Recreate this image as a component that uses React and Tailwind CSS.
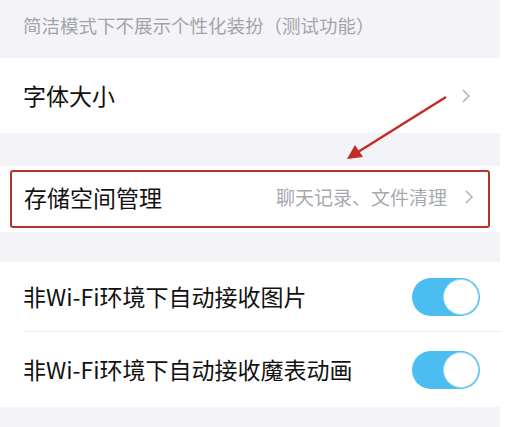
import React from 'react';

const font = { fontFamily: '"Noto Sans CJK SC", "Noto Sans", sans-serif' };

const Chevron = () => (
  <svg width="12" height="16" viewBox="0 0 12 16" className="shrink-0">
    <path d="M3 2 L9 8 L3 14" fill="none" stroke="#b4b4b8" strokeWidth="1.6" />
  </svg>
);

const Toggle = () => (
  <div className="w-[68px] h-[38px] rounded-full bg-[#4cbdf0] relative shrink-0">
    <div className="absolute right-[1px] top-[1px] w-[36px] h-[36px] rounded-full bg-white border border-[#9fd9f3]" />
  </div>
);

const App = () => {
  return (
    <div className="w-[506px] h-[427px] bg-white relative overflow-hidden" style={font}>
      <div className="w-[500px] bg-[#f4f4f8]">
        {/* hint */}
        <div className="h-[58px] px-[23px] pb-[7px] flex items-center">
          <span className="text-[18.5px] text-[#a3a3ab]">简洁模式下不展示个性化装扮（测试功能）</span>
        </div>

        {/* font size */}
        <div className="h-[75px] bg-white px-[23px] flex items-center justify-between">
          <span className="text-[23px] text-[#111]">字体大小</span>
          <div className="pr-[5px]"><Chevron /></div>
        </div>

        <div className="h-[33px]" />

        {/* storage */}
        <div className="h-[66px] bg-white px-[10px] flex items-center">
          <div className="w-full h-[58px] border-2 border-[#b8322c] rounded-[3px] pl-[12px] pr-[13px] pb-[4px] flex items-center justify-between">
            <span className="text-[23px] text-[#111]">存储空间管理</span>
            <div className="flex items-center gap-[16px]">
              <span className="text-[19px] text-[#a8a8b0]">聊天记录、文件清理</span>
              <Chevron />
            </div>
          </div>
        </div>

        <div className="h-[30px]" />

        {/* switches */}
        <div className="bg-white">
          <div className="ml-[23px] h-[70px] border-b border-[#ececef] pr-[20px] flex items-center justify-between">
            <span className="text-[23px] text-[#111]">非Wi-Fi环境下自动接收图片</span>
            <Toggle />
          </div>
          <div className="ml-[23px] h-[75px] pr-[20px] flex items-center justify-between">
            <span className="text-[23px] text-[#111]">非Wi-Fi环境下自动接收魔表动画</span>
            <Toggle />
          </div>
        </div>

        <div className="h-[30px]" />
      </div>

      {/* annotation arrow */}
      <svg className="absolute left-0 top-0" width="506" height="427" viewBox="0 0 506 427">
        <line x1="446" y1="97" x2="358" y2="152" stroke="#c42a26" strokeWidth="2.5" />
        <polygon points="347,159 355,145 363,157" fill="#c42a26" />
      </svg>
    </div>
  );
};

export default App;
